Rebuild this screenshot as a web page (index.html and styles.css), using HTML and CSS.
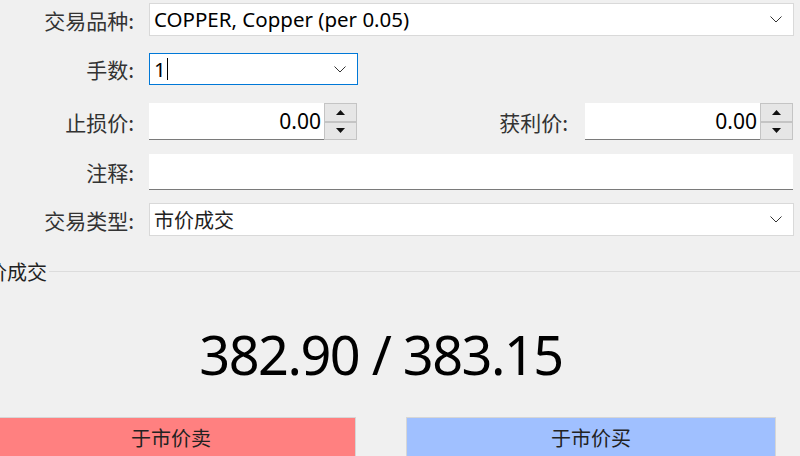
FILE: index.html
```html
<!DOCTYPE html>
<html lang="zh-CN">
<head>
<meta charset="utf-8">
<title>交易</title>
<link rel="stylesheet" href="styles.css">
</head>
<body>
<div class="page">
  <div class="form">
    <div class="label h33 r1 c1">交易品种:</div>
    <div class="combo h33 r1 cwide">
      <span class="val">COPPER, Copper (per 0.05)</span>
      <svg class="chev" width="12" height="7" viewBox="0 0 12 7"><polyline points="0.5,0.5 6,6 11.5,0.5" fill="none" stroke="#333" stroke-width="1"/></svg>
    </div>

    <div class="label h32 r2 c1">手数:</div>
    <div class="combo focus h32 r2 c2">
      <span class="val">1<span class="caret"></span></span>
      <svg class="chev" width="12" height="7" viewBox="0 0 12 7"><polyline points="0.5,0.5 6,6 11.5,0.5" fill="none" stroke="#333" stroke-width="1"/></svg>
    </div>

    <div class="label h37 r3 c1">止损价:</div>
    <div class="spin h37 r3 c2">
      <span class="num">0.00</span>
      <div class="btns">
        <div class="btn"><svg width="9" height="5" viewBox="0 0 9 5"><polygon points="0,5 9,5 4.5,0" fill="#111"/></svg></div>
        <div class="btn"><svg width="9" height="5" viewBox="0 0 9 5"><polygon points="0,0 9,0 4.5,5" fill="#111"/></svg></div>
      </div>
    </div>
    <div class="label label2 h37 r3 c3">获利价:</div>
    <div class="spin h37 r3 c4">
      <span class="num">0.00</span>
      <div class="btns">
        <div class="btn"><svg width="9" height="5" viewBox="0 0 9 5"><polygon points="0,5 9,5 4.5,0" fill="#111"/></svg></div>
        <div class="btn"><svg width="9" height="5" viewBox="0 0 9 5"><polygon points="0,0 9,0 4.5,5" fill="#111"/></svg></div>
      </div>
    </div>

    <div class="label h36 r4 c1">注释:</div>
    <div class="edit h36 r4 cspan"></div>

    <div class="label h33 r5 c1">交易类型:</div>
    <div class="combo h33 r5 cwide">
      <span class="val cjk">市价成交</span>
      <svg class="chev" width="12" height="7" viewBox="0 0 12 7"><polyline points="0.5,0.5 6,6 11.5,0.5" fill="none" stroke="#333" stroke-width="1"/></svg>
    </div>
  </div>

  <div class="group">
    <div class="gtitle">
      <span class="gtext">市价成交</span>
      <span class="gline"></span>
    </div>
    <div class="gbody">
      <div class="price">382.90 / 383.15</div>
      <div class="actions">
        <div class="action sell">于市价卖</div>
        <div class="action buy">于市价买</div>
      </div>
    </div>
  </div>
</div>
</body>
</html>
```

FILE: styles.css
```css
* { box-sizing: border-box; }
html, body {
  margin: 0;
  padding: 0;
  background: #f0f0f0;
}
body {
  width: 800px;
  height: 456px;
  overflow: hidden;
  font-family: "Noto Sans", "Noto Sans CJK SC", sans-serif;
  color: #1a1a1a;
}
.page {
  width: 800px;
  height: 456px;
  overflow: hidden;
}
.form {
  display: grid;
  grid-template-columns: 149px 208px 228px 208px 1px;
  grid-template-rows: 50px 50px 51px 49px 33px;
  padding-top: 3px;
  width: 794px;
}
.r1 { grid-row: 1; }
.r2 { grid-row: 2; }
.r3 { grid-row: 3; }
.r4 { grid-row: 4; }
.r5 { grid-row: 5; }
.c1 { grid-column: 1; }
.c2 { grid-column: 2; }
.c3 { grid-column: 3; }
.c4 { grid-column: 4; }
.cwide { grid-column: 2 / 6; }
.cspan { grid-column: 2 / 5; }

.label {
  align-self: start;
  display: flex;
  align-items: center;
  justify-content: flex-end;
  padding-right: 15px;
  font-family: "Noto Sans CJK SC", sans-serif;
  font-size: 21px;
  color: #333;
}
.label2 { padding-right: 17px; }
.h33 { height: 33px; }
.h32 { height: 32px; }
.h37 { height: 37px; }
.h36 { height: 36px; }
.combo, .spin, .edit { align-self: start; }

.combo {
  display: flex;
  align-items: center;
  justify-content: space-between;
  background: #fff;
  border: 1px solid #d9d9d9;
  padding: 0 11px 0 4px;
}
.combo.focus {
  border-color: #0078d7;
  margin-right: -1px;
}
.val {
  font-size: 20.5px;
  color: #000;
  display: flex;
  align-items: center;
  line-height: 1;
}
.val.cjk {
  font-family: "Noto Sans CJK SC", sans-serif;
  font-size: 20px;
  color: #222;
}
.caret {
  display: inline-block;
  width: 1px;
  height: 22px;
  background: #000;
  margin-left: 1px;
}
.chev { flex: none; }

.spin {
  display: flex;
  background: #fff;
  border-bottom: 1px solid #7a7a7a;
}
.num {
  flex: 1;
  display: flex;
  align-items: center;
  justify-content: flex-end;
  padding-right: 3px;
  font-size: 21px;
  color: #000;
}
.btns {
  width: 33px;
  display: flex;
  flex-direction: column;
  border: 1px solid #c4c4c4;
  background: #e6e6e6;
  margin-bottom: -1px;
}
.btn {
  flex: 1;
  display: flex;
  align-items: center;
  justify-content: center;
}
.btn + .btn { border-top: 2px solid #c4c4c4; }

.edit {
  background: #fff;
  border-bottom: 1px solid #7a7a7a;
}

.group {
  margin-top: 21px;
  margin-left: -33px;
  width: 833px;
}
.gtitle {
  display: flex;
  align-items: center;
  height: 28px;
}
.gtext {
  font-family: "Noto Sans CJK SC", sans-serif;
  font-size: 20px;
  color: #222;
  padding-right: 2px;
}
.gline {
  flex: 1;
  height: 1px;
  background: #dcdcdc;
}
.gbody {
  margin-left: 19px;
  width: 790px;
}
.price {
  text-align: center;
  font-size: 54px;
  letter-spacing: -1.5px;
  color: #000;
  line-height: 1;
  margin-top: 42px;
  height: 90px;
}
.actions {
  display: flex;
  gap: 50px;
}
.action {
  flex: 1;
  height: 40px;
  display: flex;
  align-items: center;
  justify-content: center;
  font-family: "Noto Sans CJK SC", sans-serif;
  font-size: 20px;
  color: #222;
  border: 1px solid #d6d6d6;
}
.sell { background: #ff8080; }
.buy { background: #a0c0ff; }
```
